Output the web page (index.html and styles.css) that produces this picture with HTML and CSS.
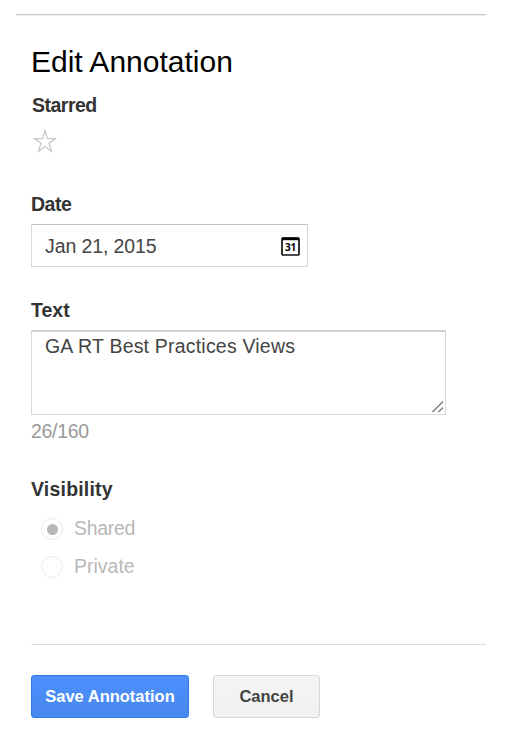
FILE: index.html
```html
<!DOCTYPE html>
<html lang="en">

<head>
    <meta charset="UTF-8">
    <meta name="viewport" content="width=device-width, initial-scale=1.0">
    <title>Edit Annotation</title>
    <link rel="stylesheet" href="styles.css">
</head>

<body>
    <form class="annotation">
        <h1>Edit Annotation</h1>

        <div class="field starred">
            <div class="label">Starred</div>
            <svg class="star" width="24" height="24" viewBox="0 0 24 24">
                <path d="M12 1.8 L14.4 9.6 H22.4 L16 14.3 L18.4 22.4 L12 17.6 L5.6 22.4 L8 14.3 L1.6 9.6 H9.6 Z" />
            </svg>
        </div>

        <div class="field date">
            <label class="label" for="date">Date</label>
            <div class="date-box">
                <input type="text" id="date" value="Jan 21, 2015">
                <svg class="calendar" width="19" height="19" viewBox="0 0 19 19">
                    <rect x="1" y="1" width="17" height="17" rx="1" />
                    <path class="top" d="M1 0.5 H18 V3.2 H1 Z" />
                    <text x="9.6" y="13.8">31</text>
                </svg>
            </div>
        </div>

        <div class="field text">
            <label class="label" for="text">Text</label>
            <div class="text-box">
                <textarea id="text" spellcheck="false">GA RT Best Practices Views</textarea>
                <svg class="grip" width="12" height="12" viewBox="0 0 12 12">
                    <path d="M0.5 11 L11 0.5 M6.5 11 L11 6.5" />
                </svg>
            </div>
            <div class="count">26/160</div>
        </div>

        <div class="field visibility">
            <div class="label">Visibility</div>
            <div class="option shared"><span class="radio checked"></span>Shared</div>
            <div class="option private"><span class="radio"></span>Private</div>
        </div>

        <div class="buttons">
            <button type="button" class="button save">Save Annotation</button>
            <button type="button" class="button cancel">Cancel</button>
        </div>
    </form>
</body>

</html>
```

FILE: styles.css
```css
* {
    box-sizing: border-box;
}

body {
    margin: 0;
    background-color: #fff;
    color: #444;
    font-family: "Liberation Sans", Arial, sans-serif;
    font-size: 19.5px;
}

.annotation {
    width: 470px;
    margin: 14px 0 0 16px;
    padding: 30px 0 0 15px;
    border-top: 1px solid #c8c8c8;
    box-shadow: inset 0 1px 0 #ebebeb;
}

h1 {
    margin: 0;
    color: #000;
    font-size: 30px;
    font-weight: normal;
    line-height: 34px;
    letter-spacing: 0;
}

.label {
    display: block;
    height: 24px;
    color: #333;
    font-size: 19.5px;
    font-weight: bold;
    line-height: 25px;
}

.starred {
    height: 98px;
    padding-top: 14px;
}

.starred .label {
    padding-left: 1px;
    letter-spacing: -0.5px;
}

.star {
    display: block;
    margin: 12px 0 0 2px;
}

.star path {
    fill: none;
    stroke: #c8c8c8;
    stroke-width: 1.3;
}

.date {
    height: 106px;
    padding-top: 15px;
}

.date .label {
    letter-spacing: -0.5px;
}

.date-box {
    display: flex;
    align-items: center;
    width: 277px;
    height: 43px;
    margin-top: 8px;
    padding: 0 7px 0 13px;
    border: 1px solid #d8d8d8;
    border-top-color: #c4c4c4;
}

.date-box input {
    flex: 1;
    min-width: 0;
    padding: 1px 0 0;
    border: 0;
    outline: none;
    background: none;
    color: #444;
    font: inherit;
    letter-spacing: -0.1px;
}

.calendar {
    margin-top: 2px;
}

.calendar rect {
    fill: #fff;
    stroke: #111;
    stroke-width: 1.7;
}

.calendar .top {
    fill: #000;
}

.calendar text {
    fill: #000;
    font-family: "Open Sans", sans-serif;
    font-size: 10px;
    font-weight: bold;
    letter-spacing: -0.2px;
    text-anchor: middle;
}

.text {
    height: 179px;
    padding-top: 15px;
}

.text .label {
    letter-spacing: 0;
}

.text-box {
    position: relative;
    width: 415px;
    height: 85px;
    margin-top: 8px;
}

.text-box textarea {
    display: block;
    width: 100%;
    height: 100%;
    padding: 2px 12px 2px 13px;
    border: 1px solid #d8d8d8;
    border-top: 2px solid #cfcfcf;
    outline: none;
    resize: none;
    overflow: hidden;
    color: #444;
    font: inherit;
    line-height: 24px;
    letter-spacing: 0.2px;
}

.grip {
    position: absolute;
    right: 2px;
    bottom: 2px;
}

.grip path {
    fill: none;
    stroke: #777;
    stroke-width: 1.2;
}

.count {
    margin-top: 4px;
    color: #999;
    line-height: 24px;
    letter-spacing: -0.3px;
}

.visibility {
    height: 182px;
    padding-top: 15px;
}

.visibility .label {
    letter-spacing: 0.2px;
}

.option {
    display: flex;
    align-items: center;
    gap: 11px;
    height: 38px;
    padding-left: 10px;
    color: #b8b8b8;
}

.shared {
    margin-top: 8px;
    letter-spacing: -0.3px;
}

.private {
    letter-spacing: 0;
}

.radio {
    display: flex;
    align-items: center;
    justify-content: center;
    width: 22px;
    height: 22px;
    margin-top: 2px;
    border: 1px solid #ebebeb;
    border-radius: 50%;
}

.checked::after {
    content: "";
    width: 11px;
    height: 11px;
    border-radius: 50%;
    background-color: #b8b8b8;
}

.buttons {
    display: flex;
    gap: 24px;
    padding-top: 30px;
    border-top: 1px solid #dedede;
}

.button {
    height: 43px;
    padding: 0;
    border-radius: 3px;
    font-family: inherit;
    font-size: 16.5px;
    font-weight: bold;
}

.save {
    width: 158px;
    border: 1px solid #3079ed;
    background: linear-gradient(#4d90fe, #4787ed);
    color: #fff;
}

.cancel {
    width: 107px;
    border: 1px solid #d8d8d8;
    background: linear-gradient(#f5f5f5, #f0f0f0);
    color: #444;
}
```
